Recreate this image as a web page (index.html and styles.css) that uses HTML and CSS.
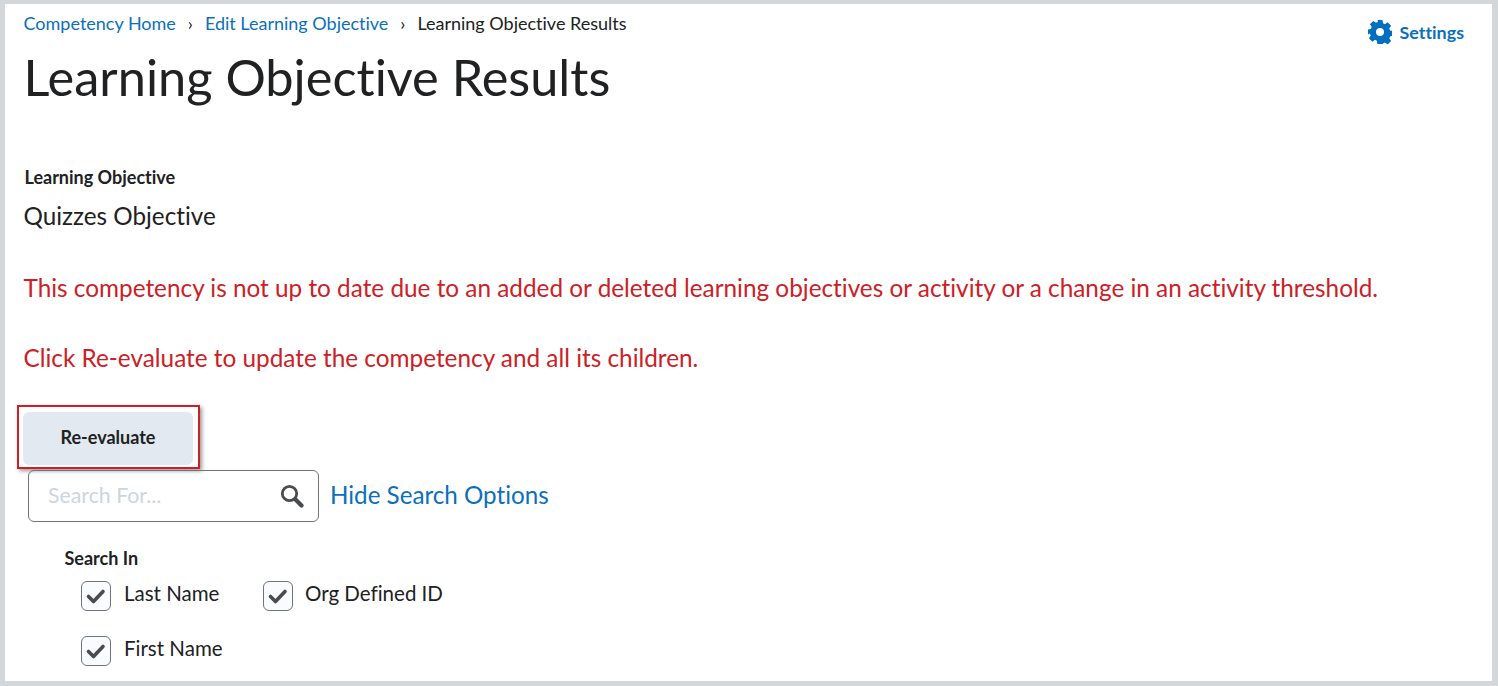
FILE: index.html
```html
<!DOCTYPE html>
<html lang="en">
<head>
<meta charset="utf-8">
<title>Learning Objective Results</title>
<link rel="stylesheet" href="styles.css">
</head>
<body>
<div class="frame">
  <header class="top">
    <nav class="crumbs">
      <a href="#">Competency Home</a><span class="sep">›</span><a href="#">Edit Learning Objective</a><span class="sep">›</span><span class="current">Learning Objective Results</span>
    </nav>
    <a class="settings" href="#">
      <svg class="gear" viewBox="0 0 24 24" width="24" height="24"><path fill="#006fbf" fill-rule="evenodd" d="M9.600 0h4.800l.6 3.300c.7.2 1.300.5 1.900.9l2.800-1.900 3.400 3.400-1.900 2.800c.4.600.7 1.200.9 1.900l3.100.600v4.800l-3.100.600c-.2.700-.5 1.300-.9 1.900l1.900 2.800-3.400 3.400-2.800-1.900c-.6.400-1.200.7-1.900.9l-.6 3.300H9.600L9 20.700c-.7-.2-1.300-.5-1.900-.9l-2.800 1.900-3.400-3.400 1.900-2.800c-.4-.6-.7-1.200-.9-1.900L0 14.400V9.600l2.900-.6c.2-.7.5-1.300.9-1.900L1.900 4.300l3.400-3.400 2.800 1.900c.6-.4 1.200-.7 1.900-.9zM12 8a4 4 0 1 0 0 8 4 4 0 0 0 0-8z"/></svg>
      <span>Settings</span>
    </a>
  </header>
  <h1 class="title">Learning Objective Results</h1>
  <div class="label objective-label">Learning Objective</div>
  <div class="objective">Quizzes Objective</div>
  <p class="warn warn-one">This competency is not up to date due to an added or deleted learning objectives or activity or a change in an activity threshold.</p>
  <p class="warn warn-two">Click Re-evaluate to update the competency and all its children.</p>
  <div class="callout"><button class="btn" type="button">Re-evaluate</button></div>
  <div class="search-row">
    <div class="search">
      <span class="placeholder">Search For...</span>
      <svg class="magnifier" viewBox="0 0 24 24" width="24" height="24"><circle cx="9.500" cy="9.500" r="7.200" fill="none" stroke="#494c4e" stroke-width="2.800"/><path d="M15.500 15.500l6 6" stroke="#494c4e" stroke-width="4.200" stroke-linecap="round"/></svg>
    </div>
    <a class="hide-link" href="#">Hide Search Options</a>
  </div>
  <div class="label search-in">Search In</div>
  <div class="checks">
    <label class="check"><span class="box"><svg viewBox="0 0 30 30" width="30" height="30"><path d="M7.500 15.500l5 5 9.500-10" fill="none" stroke="#494c4e" stroke-width="3.600" stroke-linecap="round" stroke-linejoin="round"/></svg></span><span>Last Name</span></label>
    <label class="check"><span class="box"><svg viewBox="0 0 30 30" width="30" height="30"><path d="M7.500 15.500l5 5 9.500-10" fill="none" stroke="#494c4e" stroke-width="3.600" stroke-linecap="round" stroke-linejoin="round"/></svg></span><span class="org">Org Defined ID</span></label>
    <label class="check check-wide"><span class="box"><svg viewBox="0 0 30 30" width="30" height="30"><path d="M7.500 15.500l5 5 9.500-10" fill="none" stroke="#494c4e" stroke-width="3.600" stroke-linecap="round" stroke-linejoin="round"/></svg></span><span>First Name</span></label>
  </div>
</div>
</body>
</html>
```

FILE: styles.css
```css
* { box-sizing: border-box; }
html, body { margin: 0; height: 100%; background: #fff; }
body { font-family: Lato, sans-serif; color: #202122; overflow: hidden; font-variant-ligatures: none; }
.frame {
  width: 100%; height: 100vh;
  border-style: solid;
  border-color: #d3d7da;
  border-width: 4px 6px 5px 5px;
  background: #fff;
  padding: 0 0 0 18.500px;
}
a { color: #0b6fbd; text-decoration: none; }
.top { display: flex; justify-content: space-between; height: 43px; }
.crumbs { font-size: 18px; line-height: 20px; padding-top: 10px; margin-top: -1px; white-space: nowrap; }
.sep { display: inline-block; width: 29px; text-align: center; }
.current { color: #202122; }
.settings { display: flex; align-items: center; gap: 7px; font-size: 17.900px; font-weight: 700; height: 28px; margin: 13.500px 28px 0 0; }
.gear { display: block; }
.title { margin: -1px 0 0; font-size: 50.500px; font-weight: 400; line-height: 62px; }
.label { font-size: 18px; font-weight: 700; line-height: 20px; }
.objective-label { margin: 59px 0 0 1px; }
.objective { font-size: 24.250px; line-height: 30px; margin-top: 14px; }
.warn { margin: 0; color: #cd2026; font-size: 24.340px; line-height: 30px; white-space: nowrap; }
.warn-one { margin-top: 42px; }
.warn-two { margin-top: 40px; }
.callout {
  width: 183px; height: 64px;
  margin: 32px 0 0 -7px;
  border: 2px solid #cd2026;
  box-shadow: 2px 2px 4px rgba(0,0,0,.4);
  padding: 4.500px;
  background: #fff;
}
.btn {
  display: block; width: 170px; height: 53px; border: 0; border-radius: 6px;
  background: #e3e9f1; color: #202122;
  font: 700 18px Lato, sans-serif;
  padding: 0 0 2px;
}
.search-row { display: flex; align-items: center; gap: 11px; margin: 1px 0 0 4.500px; }
.search {
  width: 291px; height: 52px;
  border: 1px solid #6e7477; border-radius: 6px;
  display: flex; align-items: center; justify-content: space-between;
  padding: 0 14px 3px 19px;
}
.placeholder { color: #cdd5dc; font-size: 21.300px; }
.magnifier { display: block; margin-top: 3px; }
.hide-link { font-size: 24.200px; line-height: 30px; margin-top: -2px; }
.search-in { margin: 25.500px 0 0 41px; }
.checks { display: grid; grid-template-columns: 182px auto; justify-content: start; row-gap: 25px; margin: 13.500px 0 0 57.500px; }
.check { display: flex; gap: 13px; font-size: 20.500px; line-height: 24px; height: 30px; }
.check-wide { grid-column: 1; }
.org { margin-left: -1px; }
.box {
  width: 30px; height: 30px; flex: none;
  border: 1px solid #6e7477; border-radius: 6px;
  background: #f9fbff;
}
.box svg { display: block; margin: -1px; }
```
